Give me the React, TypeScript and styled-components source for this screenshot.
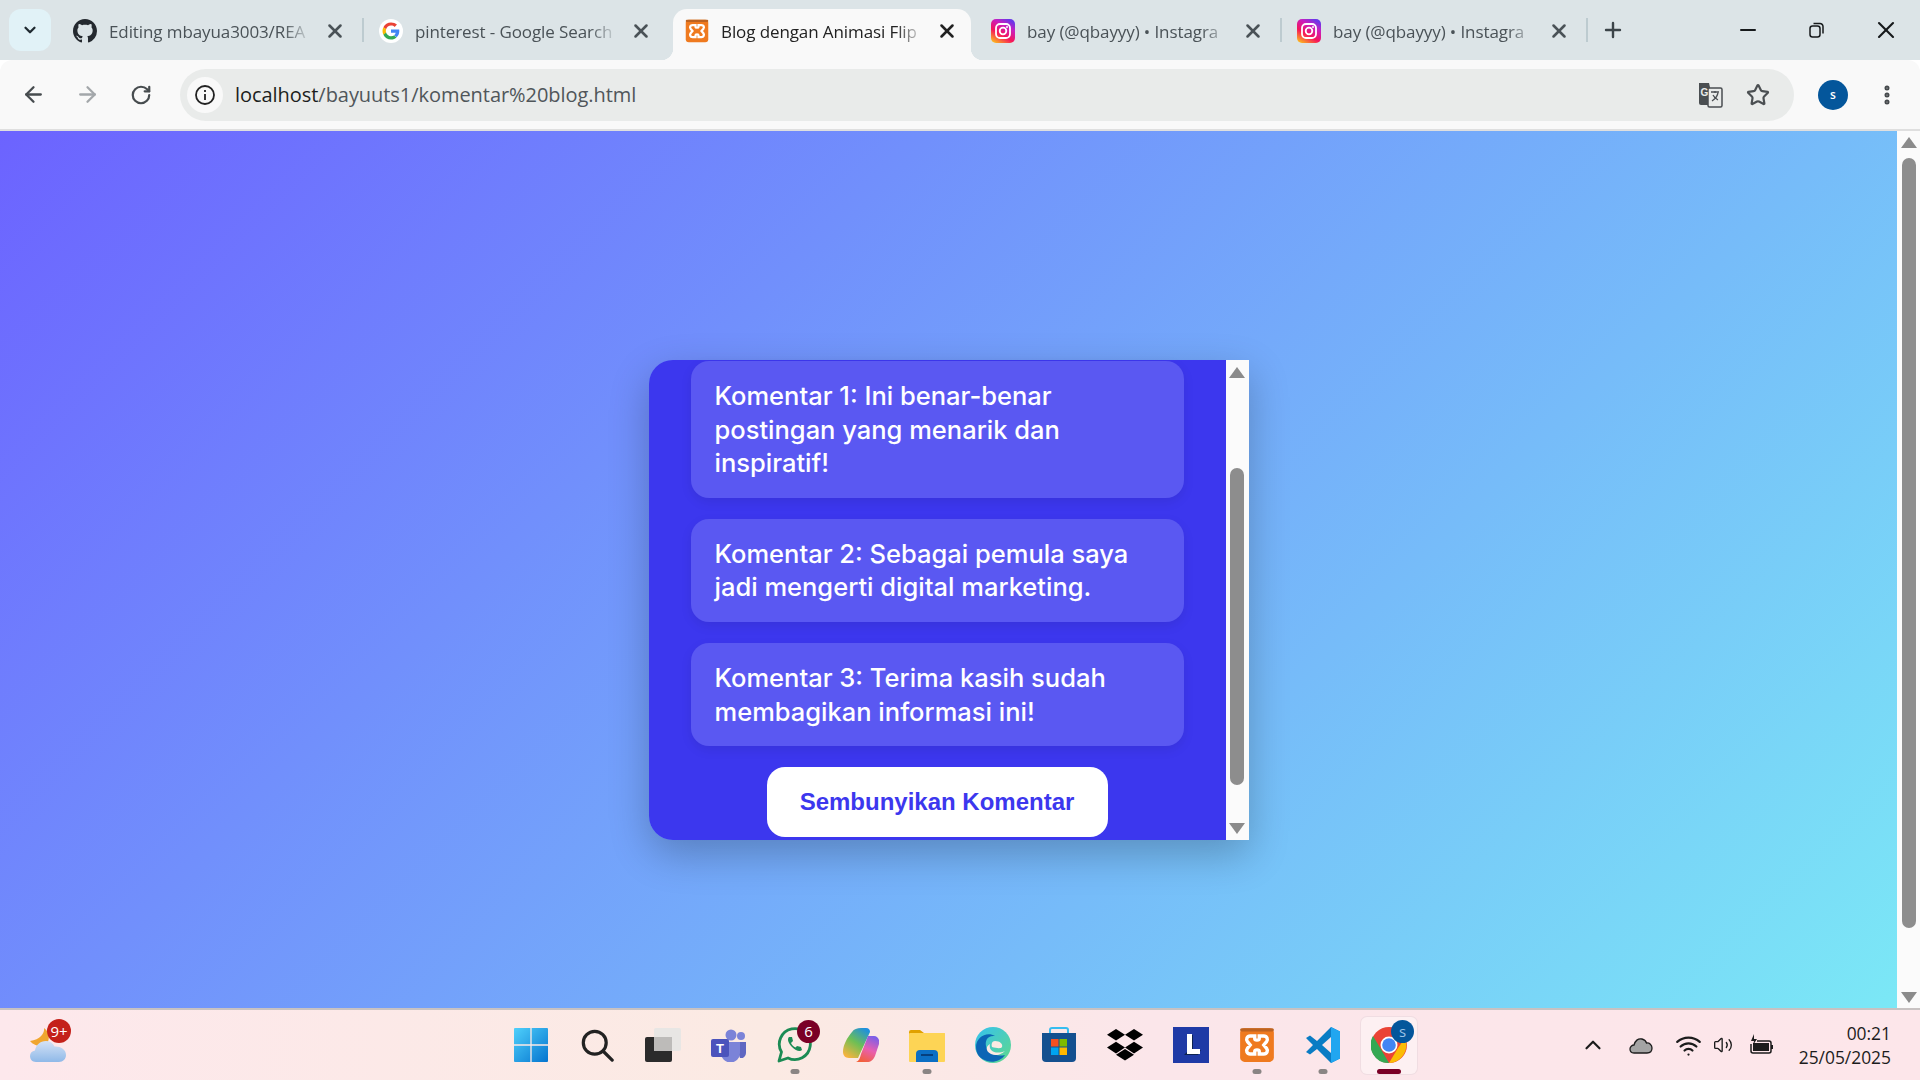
import React from 'react';
import styled, { createGlobalStyle } from 'styled-components';
import {
  ArrowLeft,
  ArrowRight,
  ChevronDown,
  ChevronUp,
  EllipsisVertical,
  Minus,
  Plus,
  RotateCw,
  Star,
  Volume2,
  Wifi,
  X,
} from 'lucide-react';

const GlobalStyle = createGlobalStyle`
  html, body {
    margin: 0;
    padding: 0;
    width: 1920px;
    height: 1080px;
    overflow: hidden;
    font-family: "Open Sans", "Noto Sans", sans-serif;
  }
  * {
    box-sizing: border-box;
  }
`;

const Screen = styled.div`
  width: 1920px;
  height: 1080px;
  display: flex;
  flex-direction: column;
`;

/* browser chrome */
const TabStrip = styled.div`
  height: 60px;
  flex: none;
  background: #dce4e7;
  display: flex;
  align-items: flex-start;
  padding: 9px 0 0 9px;
`;

const TabSearch = styled.div`
  width: 42px;
  height: 42px;
  flex: none;
  border-radius: 12px;
  background: #e1f2f7;
  display: flex;
  align-items: center;
  justify-content: center;
  color: #1f2a30;
  margin-right: 10px;
`;

const Tab = styled.div<{ $active?: boolean }>`
  position: relative;
  width: 298px;
  height: 51px;
  flex: none;
  display: flex;
  align-items: center;
  padding: 0 13px 8px 12px;
  gap: 12px;
  border-radius: 14px 14px 0 0;
  background: ${(p) => (p.$active ? '#f9f9f9' : 'transparent')};
  color: ${(p) => (p.$active ? '#222' : '#4a5257')};

  ${(p) =>
    p.$active &&
    `
    &::before, &::after {
      content: '';
      position: absolute;
      bottom: 0;
      width: 12px;
      height: 12px;
    }
    &::before {
      left: -12px;
      background: radial-gradient(circle at 0 0, transparent 12px, #f9f9f9 12.5px);
    }
    &::after {
      right: -12px;
      background: radial-gradient(circle at 100% 0, transparent 12px, #f9f9f9 12.5px);
    }
  `}
`;

const TabTitle = styled.div`
  flex: 1;
  min-width: 0;
  padding-top: 1px;
  white-space: nowrap;
  overflow: hidden;
  font-family: "Open Sans", sans-serif;
  font-size: 17px;
  letter-spacing: -0.1px;
  -webkit-mask-image: linear-gradient(90deg, #000 86%, transparent);
  mask-image: linear-gradient(90deg, #000 86%, transparent);
`;

const TabClose = styled.div`
  width: 22px;
  height: 22px;
  flex: none;
  display: flex;
  align-items: center;
  justify-content: center;
`;

const TabGap = styled.div`
  width: 8px;
  height: 42px;
  flex: none;
  display: flex;
  align-items: center;
  justify-content: center;
`;

const TabDivider = styled.div`
  width: 2px;
  height: 24px;
  flex: none;
  background: #bdcbd0;
`;

const NewTab = styled.div`
  width: 36px;
  height: 36px;
  flex: none;
  display: flex;
  align-items: center;
  justify-content: center;
  margin: 3px 0 0 4px;
  color: #3c4449;
`;

const WindowControls = styled.div`
  margin-left: auto;
  height: 32px;
  margin-top: 5px;
  display: flex;
  align-items: center;
  color: #16191b;
`;

const WindowButton = styled.div`
  width: 69px;
  display: flex;
  justify-content: center;
`;

const Toolbar = styled.div`
  height: 69px;
  flex: none;
  background: #f9f9f9;
  border-top-left-radius: 12px;
  border-top-right-radius: 12px;
  display: flex;
  align-items: center;
  padding: 0 0 0 6px;
`;

const NavButton = styled.div<{ $muted?: boolean }>`
  width: 54px;
  display: flex;
  justify-content: center;
  color: ${(p) => (p.$muted ? '#a3a7aa' : '#474c4f')};
`;

const AddressBar = styled.div`
  width: 1614px;
  height: 52px;
  margin-left: 12px;
  flex: none;
  border-radius: 26px;
  background: #e9ebea;
  display: flex;
  align-items: center;
  padding: 0 24px 0 7px;
`;

const SiteInfo = styled.div`
  width: 36px;
  height: 36px;
  border-radius: 50%;
  background: #f9f9f9;
  flex: none;
  display: flex;
  align-items: center;
  justify-content: center;
`;

const UrlText = styled.div`
  margin-left: 12px;
  font-family: "Open Sans", sans-serif;
  font-size: 20px;
  letter-spacing: -0.05px;
  color: #50565a;
  flex: 1;
`;

const UrlHost = styled.span`
  color: #1c1e20;
`;

const BarIcons = styled.div`
  display: flex;
  align-items: center;
  gap: 23px;
  color: #4b4f52;
`;

const Avatar = styled.div`
  width: 30px;
  height: 30px;
  flex: none;
  margin-left: 24px;
  border-radius: 50%;
  background: #04569b;
  color: #fff;
  font-family: "Open Sans", sans-serif;
  font-size: 12px;
  font-weight: 600;
  display: flex;
  align-items: center;
  justify-content: center;
`;

const MenuButton = styled.div`
  margin-left: 27px;
  display: flex;
  color: #45494c;
`;

const ChromeLine = styled.div`
  height: 2px;
  flex: none;
  background: #dfdfdf;
`;

/* page */
const Viewport = styled.div`
  height: 877px;
  flex: none;
  display: flex;
`;

const Page = styled.div`
  flex: 1;
  background: linear-gradient(135deg, #6c63ff, #7be8f6);
  padding-top: 229px;
  display: flex;
  justify-content: center;
`;

const Panel = styled.div`
  width: 600px;
  height: 480px;
  display: flex;
  border-radius: 24px 0 0 24px;
  box-shadow: 0 14px 40px rgba(0, 0, 0, 0.24);
`;

const PanelBody = styled.div`
  flex: 1;
  background: #3c37ee;
  border-radius: 24px 0 0 24px;
  padding: 1px 42px 3px 42px;
  display: flex;
  flex-direction: column;
  gap: 21px;
  align-items: stretch;
`;

const Comment = styled.div`
  background: #5a58f2;
  border-radius: 18px;
  padding: 18px 24px;
  color: #fff;
  font-family: "Inter", sans-serif;
  font-size: 25.5px;
  font-weight: 500;
  line-height: 33.6px;
  box-shadow: 0 4px 12px rgba(0, 0, 0, 0.08);
`;

const ToggleButton = styled.button`
  align-self: center;
  width: 341px;
  height: 70px;
  flex: none;
  border: none;
  border-radius: 18px;
  background: #fff;
  color: #3c37ee;
  font-family: "Liberation Sans", Arial, sans-serif;
  font-size: 24px;
  font-weight: 700;
`;

const Scrollbar = styled.div`
  width: 23px;
  flex: none;
  background: #fbfbfb;
  display: flex;
  flex-direction: column;
  align-items: center;
`;

const ScrollArrow = styled.div<{ $down?: boolean }>`
  width: 0;
  height: 0;
  flex: none;
  border-left: 8px solid transparent;
  border-right: 8px solid transparent;
  ${(p) => (p.$down ? 'border-top: 11px solid #8b8b8b;' : 'border-bottom: 11px solid #8b8b8b;')}
`;

const ScrollThumb = styled.div<{ $top: number; $height: number }>`
  width: 14px;
  height: ${(p) => p.$height}px;
  margin-top: ${(p) => p.$top}px;
  margin-bottom: auto;
  flex: none;
  border-radius: 7px;
  background: #8d8d8d;
`;

const PanelScroll = styled(Scrollbar)`
  padding: 7px 0 6px;
`;

const PageScroll = styled(Scrollbar)`
  padding: 6px 0 5px;
`;

/* taskbar */
const Taskbar = styled.div`
  position: relative;
  height: 72px;
  flex: none;
  border-top: 2px solid #c8c2c2;
  background: linear-gradient(90deg, #fde8ec 0%, #fbeae3 40%, #fbe6ea 60%, #fde6ea 100%);
  display: flex;
  align-items: center;
`;

const Weather = styled.div`
  position: relative;
  margin-left: 30px;
  width: 36px;
  height: 34px;
`;

const WeatherBadge = styled.div`
  position: absolute;
  top: -9px;
  right: -5px;
  width: 24px;
  height: 24px;
  border-radius: 50%;
  background: #c4211a;
  color: #fff;
  font-family: "Open Sans", sans-serif;
  font-size: 15px;
  display: flex;
  align-items: center;
  justify-content: center;
`;

const TaskBadge = styled.div<{ $bg: string; $fg: string }>`
  position: absolute;
  top: 3px;
  right: 3px;
  width: 23px;
  height: 23px;
  border-radius: 50%;
  background: ${(p) => p.$bg};
  color: ${(p) => p.$fg};
  font-family: "Open Sans", sans-serif;
  font-size: 15px;
  display: flex;
  align-items: center;
  justify-content: center;
`;

const TaskIcons = styled.div`
  position: absolute;
  left: 498px;
  top: 0;
  height: 70px;
  display: flex;
  align-items: center;
`;

const TaskItem = styled.div<{ $active?: boolean }>`
  position: relative;
  width: 56px;
  height: 57px;
  margin: 0 5px;
  display: flex;
  align-items: center;
  justify-content: center;
  border-radius: 6px;
  background: ${(p) => (p.$active ? '#fdf0f2' : 'transparent')};
  box-shadow: ${(p) => (p.$active ? '0 0 0 1px #f0dde2' : 'none')};
`;

const RunDot = styled.div<{ $active?: boolean }>`
  position: absolute;
  bottom: 0;
  left: 50%;
  transform: translateX(-50%);
  width: ${(p) => (p.$active ? 24 : 9)}px;
  height: 5px;
  border-radius: 2.5px;
  background: ${(p) => (p.$active ? '#7a0026' : '#8a8584')};
`;

const Tray = styled.div`
  margin-left: auto;
  display: flex;
  align-items: center;
  color: #1c1c1c;
  padding-right: 29px;
`;

const TraySlot = styled.div<{ $width: number }>`
  width: ${(p) => p.$width}px;
  flex: none;
  display: flex;
  justify-content: center;
`;

const Clock = styled.div`
  margin-left: 10px;
  text-align: right;
  font-family: "Open Sans", sans-serif;
  font-size: 17.4px;
  line-height: 24px;
  color: #1c1c1c;
`;

const GithubIcon = () => (
  <svg width="24" height="24" viewBox="0 0 16 16" fill="#24292f">
    <path d="M8 0C3.58 0 0 3.58 0 8c0 3.54 2.29 6.53 5.47 7.59.4.07.55-.17.55-.38 0-.19-.01-.82-.01-1.49-2.01.37-2.53-.49-2.69-.94-.09-.23-.48-.94-.82-1.13-.28-.15-.68-.52-.01-.53.63-.01 1.08.58 1.23.82.72 1.21 1.87.87 2.33.66.07-.52.28-.87.51-1.07-1.78-.2-3.64-.89-3.64-3.95 0-.87.31-1.59.82-2.15-.08-.2-.36-1.02.08-2.12 0 0 .67-.21 2.2.82.64-.18 1.32-.27 2-.27s1.36.09 2 .27c1.53-1.04 2.2-.82 2.2-.82.44 1.1.16 1.92.08 2.12.51.56.82 1.27.82 2.15 0 3.07-1.87 3.75-3.65 3.95.29.25.54.73.54 1.48 0 1.07-.01 1.93-.01 2.2 0 .21.15.46.55.38A8.01 8.01 0 0 0 16 8c0-4.42-3.58-8-8-8z" />
  </svg>
);

const GoogleIcon = () => (
  <svg width="24" height="24" viewBox="0 0 48 48">
    <circle cx="24" cy="24" r="24" fill="#fff" />
    <path fill="#EA4335" d="M24 13c3 0 5.4 1 7.3 2.8l4.6-4.6C33 8.500 28.900 7 24 7 17.300 7 11.600 10.800 8.800 16.400l5.400 4.200C15.500 16.300 19.400 13 24 13z" />
    <path fill="#4285F4" d="M40.600 24.500c0-1.200-.1-2.300-.3-3.400H24v6.500h9.400c-.4 2.100-1.600 3.900-3.400 5.100l5.200 4c3.300-3 5.400-7.100 5.400-12.200z" />
    <path fill="#FBBC05" d="M14.200 27.400c-.3-1-.5-2.200-.5-3.400s.2-2.300.5-3.400l-5.400-4.200C7.700 18.600 7 21.200 7 24s.7 5.400 1.800 7.600l5.400-4.200z" />
    <path fill="#34A853" d="M24 41c4.600 0 8.500-1.500 11.200-4.100l-5.200-4c-1.500 1-3.400 1.600-6 1.600-4.600 0-8.500-3.100-9.800-7.300l-5.400 4.200C11.600 37.200 17.300 41 24 41z" />
  </svg>
);

const XamppIcon = ({ size = 24 }: { size?: number }) => (
  <svg width={size} height={size} viewBox="0 0 32 32">
    <rect x="1" y="1" width="30" height="30" rx="4" fill="#ef7a1f" />
    <rect x="1" y="1" width="30" height="3" rx="1.500" fill="#bd6321" />
    <path
      d="M10 8h4v2.500c0 1.500 4 1.500 4 0V8h4c3 0 4 3 2.500 5L22 16l2.500 3c1.500 2 .5 5-2.500 5h-4v-2.500c0-1.500-4-1.500-4 0V24h-4c-3 0-4-3-2.500-5L10 16l-2.500-3C6 11 7 8 10 8z"
      fill="none"
      stroke="#fff"
      strokeWidth="3"
    />
  </svg>
);

const InstagramIcon = ({ id }: { id: string }) => (
  <svg width="24" height="24" viewBox="0 0 24 24">
    <defs>
      <linearGradient id={id} x1="0.1" y1="1" x2="0.7" y2="0">
        <stop offset="0" stopColor="#fdc31c" />
        <stop offset="0.4" stopColor="#f6155a" />
        <stop offset="0.75" stopColor="#c81fc0" />
        <stop offset="1" stopColor="#6a37e8" />
      </linearGradient>
    </defs>
    <rect width="24" height="24" rx="5" fill={`url(#${id})`} />
    <rect x="5" y="5" width="14" height="14" rx="4" fill="none" stroke="#fff" strokeWidth="1.800" />
    <circle cx="12" cy="12" r="3.300" fill="none" stroke="#fff" strokeWidth="1.800" />
    <circle cx="16" cy="8" r="1" fill="#fff" />
  </svg>
);

const TranslateIcon = () => (
  <svg width="26" height="26" viewBox="0 0 26 26">
    <path d="M2 1h10l5 22H4a2 2 0 0 1-2-2z" fill="#4a4e51" />
    <rect x="11" y="6" width="14" height="19" rx="1.500" fill="#e9ebea" stroke="#4a4e51" strokeWidth="1.500" />
    <text x="3.500" y="14" fontFamily="Liberation Sans" fontWeight="700" fontSize="10" fill="#e9ebea">G</text>
    <path d="M14 10h8M18 9v2M21 11c-1 4-3 6-6 8M16 13c1 2 3 4 5 5" fill="none" stroke="#4a4e51" strokeWidth="1.300" />
  </svg>
);

const RestoreIcon = () => (
  <svg width="16" height="16" viewBox="0 0 16 16" fill="none" stroke="currentColor" strokeWidth="1.500">
    <rect x="1" y="4" width="10" height="11" rx="2.500" />
    <path d="M4.500 1.500h6.500a3 3 0 0 1 3 3v7" />
  </svg>
);

const WeatherIcon = () => (
  <svg width="36" height="34" viewBox="0 0 36 34">
    <defs>
      <linearGradient id="cloudGrad" x1="0" y1="0" x2="0" y2="1">
        <stop offset="0" stopColor="#d4e2f6" />
        <stop offset="1" stopColor="#8fb9e8" />
      </linearGradient>
    </defs>
    <path d="M14 0c1 5-4 12-14 13 3 4 9 6 14 5 6-3 7-13 0-18z" fill="#f0a62f" />
    <path d="M6 34c-4 0-6-3-6-6s2-5 5-5.500C6 17 10 13 16 13c4 0 7 2 8.500 5.500C30 18 36 21 36 27c0 4-3 7-7 7z" fill="url(#cloudGrad)" />
  </svg>
);

const StartIcon = () => (
  <svg width="34" height="34" viewBox="0 0 36 36">
    <defs>
      <linearGradient id="winGrad" x1="0" y1="0" x2="1" y2="1">
        <stop offset="0" stopColor="#4fd0fb" />
        <stop offset="1" stopColor="#0474cf" />
      </linearGradient>
    </defs>
    <path d="M0 1a1 1 0 0 1 1-1h16.300v17.300H0zM18.700 0H35a1 1 0 0 1 1 1v16.300H18.700zM0 18.700h17.300V36H1a1 1 0 0 1-1-1zM18.700 18.700H36V35a1 1 0 0 1-1 1H18.700z" fill="url(#winGrad)" />
  </svg>
);

const SearchIcon = () => (
  <svg width="33" height="33" viewBox="0 0 36 36" fill="none" stroke="#222" strokeWidth="3.500" strokeLinecap="round">
    <circle cx="15" cy="15" r="12.500" />
    <path d="M24 24l10 10" />
  </svg>
);

const TaskViewIcon = () => (
  <svg width="36" height="34" viewBox="0 0 36 34">
    <rect x="0" y="9" width="27" height="25" rx="2" fill="#2b2b2b" />
    <rect x="9" y="0" width="27" height="23" rx="2" fill="#e8e6e4" />
    <rect x="9" y="9" width="18" height="14" fill="#bdbbb9" />
  </svg>
);

const TeamsIcon = () => (
  <svg width="36" height="33" viewBox="0 0 36 33">
    <circle cx="30" cy="7" r="4" fill="#7b83d8" />
    <circle cx="20" cy="6" r="5.500" fill="#7b83d8" />
    <path d="M24 13h11v11a5 5 0 0 1-6 5z" fill="#5f67c2" />
    <path d="M10 13h19v11a9 9 0 0 1-19 0z" fill="#7b83d8" />
    <rect x="0" y="10" width="18" height="18" rx="2" fill="#4b53bc" />
    <text x="9" y="24" textAnchor="middle" fontFamily="Liberation Sans" fontWeight="700" fontSize="13" fill="#fff">T</text>
  </svg>
);

const WhatsappIcon = () => (
  <svg width="36" height="36" viewBox="0 0 36 36" fill="none">
    <path d="M2 34l2.500-9A15.500 15.500 0 1 1 11 31z" stroke="#1b8b54" strokeWidth="2.800" strokeLinejoin="round" />
    <path d="M12 10c-2 2-1 6 3 10s8 5 10 3l-1-3-4-1-1.500 1.500c-2-1-3.500-2.500-4.500-4.500L16 14l-1-4z" fill="#1b8b54" />
  </svg>
);

const CopilotIcon = () => (
  <svg width="36" height="34" viewBox="0 0 36 34">
    <defs>
      <linearGradient id="copA" x1="0.2" y1="1" x2="0.8" y2="0">
        <stop offset="0" stopColor="#f9b33e" />
        <stop offset="0.5" stopColor="#6ebf54" />
        <stop offset="1" stopColor="#1d8fe0" />
      </linearGradient>
      <linearGradient id="copB" x1="0.3" y1="1" x2="0.7" y2="0">
        <stop offset="0" stopColor="#f2603a" />
        <stop offset="0.5" stopColor="#e85fb0" />
        <stop offset="1" stopColor="#7b5fe8" />
      </linearGradient>
    </defs>
    <path d="M9 4c2-3 5-4 9-4h5c3 0 4 2 4 4L15 30H6c-4 0-6-3-6-6 0-7 4-14 9-20z" fill="url(#copA)" />
    <path d="M13 34h11c4 0 6-2 8-6l4-12c1-4-1-8-5-8h-6l-7 18c-1 4-2 7-5 8z" fill="url(#copB)" />
  </svg>
);

const FilesIcon = () => (
  <svg width="36" height="33" viewBox="0 0 36 33">
    <path d="M0 3a2 2 0 0 1 2-2h9l4 3h19a2 2 0 0 1 2 2v4H0z" fill="#e0a100" />
    <rect x="0" y="4" width="36" height="29" rx="1" fill="#fdd455" />
    <path d="M7 25a4 4 0 0 1 4-4h14a4 4 0 0 1 4 4v8H7z" fill="#0c6fc4" />
    <rect x="12" y="25" width="12" height="2" fill="#063f7d" />
  </svg>
);

const EdgeIcon = () => (
  <svg width="36" height="36" viewBox="0 0 36 36">
    <defs>
      <linearGradient id="edgeA" x1="0" y1="0" x2="1" y2="1">
        <stop offset="0" stopColor="#35c1f1" />
        <stop offset="1" stopColor="#5fd98a" />
      </linearGradient>
    </defs>
    <circle cx="18" cy="18" r="18" fill="url(#edgeA)" />
    <path d="M1 20C1 10 12 4 20 9c-8-1-10 5-9 10 1 7 10 11 19 9-4 6-12 8-18 6C5 32 1 27 1 20z" fill="#0c65b5" />
    <path d="M20 14c5 0 8 3 7 6-1 2-6 1-10 0-1-3 0-6 3-6z" fill="#fbeae3" />
    <path d="M15 17c-2 7 6 11 15 7-2 2-8 6-14 3s-5-8-1-10z" fill="#fbeae3" />
  </svg>
);

const StoreIcon = () => (
  <svg width="36" height="36" viewBox="0 0 36 36">
    <path d="M9 6V3a2 2 0 0 1 2-2h14a2 2 0 0 1 2 2v3" fill="none" stroke="#36bdf0" strokeWidth="2" />
    <path d="M1 6h34v25a4 4 0 0 1-4 4H5a4 4 0 0 1-4-4z" fill="#14508f" />
    <rect x="10" y="12" width="7.500" height="7.500" fill="#f25022" />
    <rect x="18.500" y="12" width="7.500" height="7.500" fill="#7fba00" />
    <rect x="10" y="20.500" width="7.500" height="7.500" fill="#00a4ef" />
    <rect x="18.500" y="20.500" width="7.500" height="7.500" fill="#ffb900" />
  </svg>
);

const DropboxIcon = () => (
  <svg width="36" height="32" viewBox="0 0 36 32" fill="#000">
    <path d="M9 0l9 5.800-9 5.800L0 5.800zM27 0l9 5.800-9 5.800-9-5.800zM9 12.800l9 5.800-9 5.800-9-5.800zM27 12.800l9 5.800-9 5.800-9-5.800zM18 20l9 5.800-9 5.800-9-5.800z" />
  </svg>
);

const LaunchIcon = () => (
  <svg width="36" height="36" viewBox="0 0 36 36">
    <rect width="36" height="36" fill="#1f3aa6" />
    <path d="M11 28l3-3V8h6v15h8l-3 5z" fill="#0d2350" />
    <path d="M14 7h5v15h8v5H14z" fill="#fff" />
  </svg>
);

const VscodeIcon = () => (
  <svg width="36" height="36" viewBox="0 0 36 36">
    <path d="M26 0l9 4.500v27L26 36l-14-14-7 5.500-4-2.500 7-7-7-7 4-2.500 7 5.500z" fill="#0a7cc4" />
    <path d="M26 0l9 4.500v27L26 36z" fill="#21a6f0" />
    <path d="M26 10v16l-9-8z" fill="#fbe6ea" />
  </svg>
);

const ChromeIcon = () => (
  <svg width="36" height="36" viewBox="0 0 36 36">
    <circle cx="18" cy="18" r="18" fill="#ea4335" />
    <path d="M2 9l9 15 7 12A18 18 0 0 1 2 9z" fill="#34a853" />
    <path d="M18 36l9-15 7-10a18 18 0 0 1-16 25z" fill="#fbbc05" />
    <circle cx="18" cy="18" r="8.500" fill="#fff" />
    <circle cx="18" cy="18" r="6.800" fill="#4285f4" />
  </svg>
);

const CloudIcon = () => (
  <svg width="24" height="17" viewBox="0 0 24 17">
    <path d="M5 16c-3 0-4-2-4-4s2-4 4-4c1-4 4-7 8-6 2 .5 4 2 4.500 4 3-.5 5.500 2 5.500 5s-2 5-5 5z" fill="#a4a4a4" stroke="#1c1c1c" strokeWidth="1.300" />
  </svg>
);

const BatteryIcon = () => (
  <svg width="24" height="24" viewBox="0 0 24 24">
    <path d="M8 8h12a2 2 0 0 1 2 2v8a2 2 0 0 1-2 2H4a2 2 0 0 1-2-2v-7" fill="none" stroke="#1c1c1c" strokeWidth="1.500" />
    <rect x="4" y="10" width="16" height="8" fill="#1c1c1c" />
    <rect x="22" y="12" width="2" height="4" fill="#1c1c1c" />
    <path d="M5 1L2 8h3l-1 4 4-6H5z" fill="#1c1c1c" />
  </svg>
);

const tabs = [
  { title: 'Editing mbayua3003/REA', icon: <GithubIcon />, divider: true },
  { title: 'pinterest - Google Search', icon: <GoogleIcon /> },
  { title: 'Blog dengan Animasi Flip', icon: <XamppIcon />, active: true },
  { title: 'bay (@qbayyy) • Instagra', icon: <InstagramIcon id="igA" />, divider: true },
  { title: 'bay (@qbayyy) • Instagra', icon: <InstagramIcon id="igB" />, divider: true },
];

const comments = [
  'Komentar 1: Ini benar-benar postingan yang menarik dan inspiratif!',
  'Komentar 2: Sebagai pemula saya jadi mengerti digital marketing.',
  'Komentar 3: Terima kasih sudah membagikan informasi ini!',
];

const taskItems = [
  { key: 'start', icon: <StartIcon /> },
  { key: 'search', icon: <SearchIcon /> },
  { key: 'view', icon: <TaskViewIcon /> },
  { key: 'teams', icon: <TeamsIcon /> },
  { key: 'whatsapp', icon: <WhatsappIcon />, running: true, badge: '6' },
  { key: 'copilot', icon: <CopilotIcon /> },
  { key: 'files', icon: <FilesIcon />, running: true },
  { key: 'edge', icon: <EdgeIcon /> },
  { key: 'store', icon: <StoreIcon /> },
  { key: 'dropbox', icon: <DropboxIcon /> },
  { key: 'launch', icon: <LaunchIcon /> },
  { key: 'xampp', icon: <XamppIcon size={36} />, running: true },
  { key: 'vscode', icon: <VscodeIcon />, running: true },
  { key: 'chrome', icon: <ChromeIcon />, active: true, badge: 's' },
];

export default function App() {
  return (
    <Screen>
      <GlobalStyle />
      <TabStrip>
        <TabSearch>
          <ChevronDown size={18} strokeWidth={3} />
        </TabSearch>
        {tabs.map((tab, i) => (
          <React.Fragment key={i}>
            <Tab $active={tab.active}>
              {tab.icon}
              <TabTitle>{tab.title}</TabTitle>
              <TabClose>
                <X size={22} strokeWidth={2.8} />
              </TabClose>
            </Tab>
            <TabGap>{tab.divider && <TabDivider />}</TabGap>
          </React.Fragment>
        ))}
        <NewTab>
          <Plus size={24} strokeWidth={2.4} />
        </NewTab>
        <WindowControls>
          <WindowButton>
            <Minus size={24} strokeWidth={2} />
          </WindowButton>
          <WindowButton>
            <RestoreIcon />
          </WindowButton>
          <WindowButton>
            <X size={28} strokeWidth={1.8} />
          </WindowButton>
        </WindowControls>
      </TabStrip>
      <Toolbar>
        <NavButton>
          <ArrowLeft size={25} strokeWidth={2.2} />
        </NavButton>
        <NavButton $muted>
          <ArrowRight size={25} strokeWidth={2.2} />
        </NavButton>
        <NavButton>
          <RotateCw size={22} strokeWidth={2.4} />
        </NavButton>
        <AddressBar>
          <SiteInfo>
            <svg width="22" height="22" viewBox="0 0 22 22" fill="none" stroke="#222" strokeWidth="1.800">
              <circle cx="11" cy="11" r="9" />
              <path d="M11 10v6M11 6v2" />
            </svg>
          </SiteInfo>
          <UrlText>
            <UrlHost>localhost</UrlHost>/bayuuts1/komentar%20blog.html
          </UrlText>
          <BarIcons>
            <TranslateIcon />
            <Star size={24} strokeWidth={2.2} />
          </BarIcons>
        </AddressBar>
        <Avatar>s</Avatar>
        <MenuButton>
          <EllipsisVertical size={24} strokeWidth={3} />
        </MenuButton>
      </Toolbar>
      <ChromeLine />
      <Viewport>
        <Page>
          <Panel>
            <PanelBody>
              {comments.map((text) => (
                <Comment key={text}>{text}</Comment>
              ))}
              <ToggleButton>Sembunyikan Komentar</ToggleButton>
            </PanelBody>
            <PanelScroll>
              <ScrollArrow />
              <ScrollThumb $top={90} $height={317} />
              <ScrollArrow $down />
            </PanelScroll>
          </Panel>
        </Page>
        <PageScroll>
          <ScrollArrow />
          <ScrollThumb $top={10} $height={770} />
          <ScrollArrow $down />
        </PageScroll>
      </Viewport>
      <Taskbar>
        <Weather>
          <WeatherIcon />
          <WeatherBadge>9+</WeatherBadge>
        </Weather>
        <TaskIcons>
          {taskItems.map((item) => (
            <TaskItem key={item.key} $active={item.active}>
              {item.icon}
              {item.badge && (
                <TaskBadge
                  $bg={item.key === 'chrome' ? '#04569b' : '#7a0026'}
                  $fg={item.key === 'chrome' ? '#9cc3e6' : '#fff'}
                >
                  {item.badge}
                </TaskBadge>
              )}
              {item.running && <RunDot />}
              {item.active && <RunDot $active />}
            </TaskItem>
          ))}
        </TaskIcons>
        <Tray>
          <TraySlot $width={48}>
            <ChevronUp size={26} strokeWidth={2} />
          </TraySlot>
          <TraySlot $width={48}>
            <CloudIcon />
          </TraySlot>
          <TraySlot $width={48}>
            <Wifi size={27} strokeWidth={2} />
          </TraySlot>
          <TraySlot $width={20}>
            <Volume2 size={28} strokeWidth={1.6} />
          </TraySlot>
          <TraySlot $width={56}>
            <BatteryIcon />
          </TraySlot>
          <Clock>
            00:21
            <br />
            25/05/2025
          </Clock>
        </Tray>
      </Taskbar>
    </Screen>
  );
}
